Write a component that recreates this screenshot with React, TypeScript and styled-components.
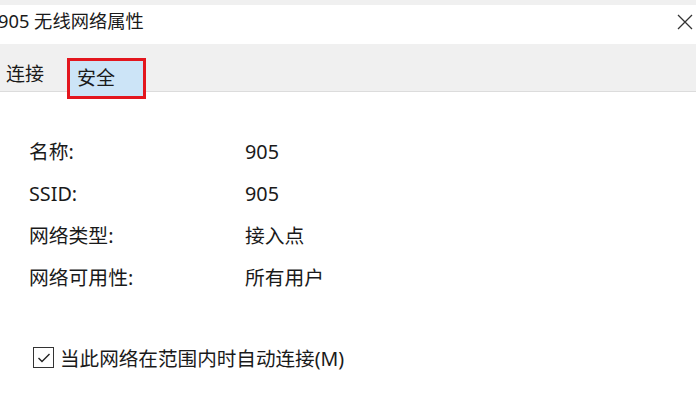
import styled, { createGlobalStyle } from 'styled-components';

const GlobalStyle = createGlobalStyle`
  html, body {
    margin: 0;
    padding: 0;
    background: #ffffff;
  }
  body {
    font-family: "Noto Sans", "Noto Sans CJK SC", sans-serif;
    color: #1a1a1a;
  }
`;

const Window = styled.div`
  width: 696px;
  height: 400px;
  overflow: hidden;
  background: #ffffff;
  display: flex;
  flex-direction: column;
`;

const TopStrip = styled.div`
  height: 5px;
  background: #f0f0f0;
`;

const TitleBar = styled.div`
  height: 39px;
  display: flex;
  align-items: center;
  justify-content: space-between;
  padding: 0 2px 0 0;
`;

const Title = styled.span`
  font-size: 18.3px;
  margin-left: -2px;
  margin-top: -9px;
  color: #1a1a1a;
`;

const CloseButton = styled.div`
  width: 18px;
  height: 18px;
  margin-top: -6px;
  display: flex;
`;

const TabStrip = styled.div`
  height: 47px;
  background: #f0f0f0;
  border-bottom: 1px solid #dcdcdc;
  display: flex;
  align-items: flex-start;
`;

const Tab = styled.div<{ $active?: boolean }>`
  font-size: 19px;
  line-height: 1;
  padding: ${(p) => (p.$active ? '8px 28px 0 7px' : '0')};
  margin: ${(p) => (p.$active ? '17px 0 0 26px' : '21px 0 0 6px')};
  background: ${(p) => (p.$active ? '#cce4f7' : 'transparent')};
  outline: ${(p) => (p.$active ? '3px solid #e3161e' : 'none')};
  color: #1a1a1a;
  height: ${(p) => (p.$active ? '35px' : 'auto')};
  box-sizing: border-box;
`;

const Content = styled.div`
  padding: 47px 0 0 29px;
  display: flex;
  flex-direction: column;
`;

const PropertyGrid = styled.div`
  display: grid;
  grid-template-columns: 216px auto;
  row-gap: 16px;
  font-size: 19.8px;
  line-height: 26px;
`;

const Label = styled.span`
  color: #1a1a1a;
`;

const Value = styled.span`
  color: #1a1a1a;
`;

const CheckRow = styled.label`
  margin-top: 52px;
  margin-left: 4px;
  display: flex;
  align-items: center;
  gap: 6px;
  font-size: 19.6px;
  color: #1a1a1a;
`;

const CheckBox = styled.span`
  width: 19px;
  height: 19px;
  border: 1px solid #333;
  display: flex;
  align-items: center;
  justify-content: center;
  background: #fff;
`;

const rows: [string, string][] = [
  ['名称:', '905'],
  ['SSID:', '905'],
  ['网络类型:', '接入点'],
  ['网络可用性:', '所有用户'],
];

export default function App() {
  return (
    <Window>
      <GlobalStyle />
      <TopStrip />
      <TitleBar>
        <Title>905 无线网络属性</Title>
        <CloseButton>
          <svg width="18" height="18" viewBox="0 0 18 18">
            <path d="M2 2 L16 16 M16 2 L2 16" stroke="#333" strokeWidth="1.3" fill="none" />
          </svg>
        </CloseButton>
      </TitleBar>
      <TabStrip>
        <Tab>连接</Tab>
        <Tab $active>安全</Tab>
      </TabStrip>
      <Content>
        <PropertyGrid>
          {rows.map(([k, v]) => (
            <>
              <Label key={k}>{k}</Label>
              <Value key={k + 'v'}>{v}</Value>
            </>
          ))}
        </PropertyGrid>
        <CheckRow>
          <CheckBox>
            <svg width="14" height="12" viewBox="0 0 14 12">
              <path d="M1.5 6 L5 9.5 L12.5 2" stroke="#222" strokeWidth="1.4" fill="none" />
            </svg>
          </CheckBox>
          当此网络在范围内时自动连接(M)
        </CheckRow>
      </Content>
    </Window>
  );
}
